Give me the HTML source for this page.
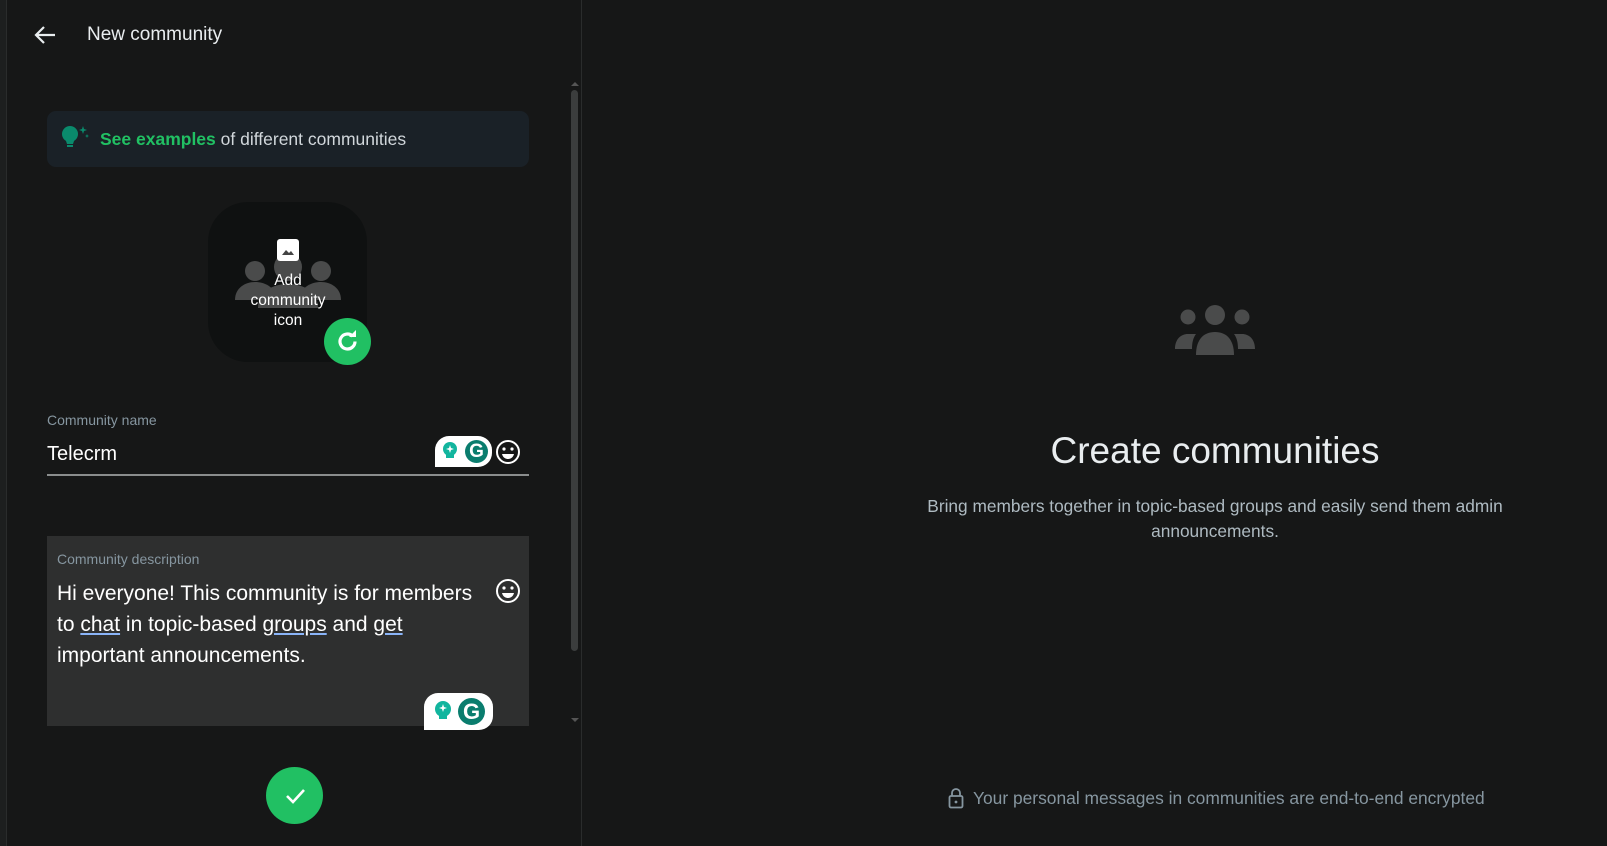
<!DOCTYPE html>
<html><head><meta charset="utf-8"><style>
*{margin:0;padding:0;box-sizing:border-box}
body{width:1607px;height:846px;background:#161717;font-family:"Liberation Sans",sans-serif;color:#e9edef;position:relative;overflow:hidden}
.abs{position:absolute}
.left{left:0;top:0;width:582px;height:846px;background:#161717;border-right:1px solid #2a2c2c}
.lb{left:0;top:0;width:7px;height:846px;background:#1d1f1f;border-right:1px solid #2a2c2c}
.right{left:583px;top:0;width:1024px;height:846px;background:#161717}
.c{text-align:center;transform:translateX(-50%)}
.g{background:#fff;border-radius:14px 14px 14px 0;display:flex;align-items:center;gap:4px;padding:0 4px}
</style></head><body>
<div class="abs left"></div>
<div class="abs lb"></div>
<svg class="abs" style="left:34px;top:25px" width="22" height="20" viewBox="0 0 22 20"><path d="M21 10H3M10 2L2 10l8 8" stroke="#e9edef" stroke-width="2.2" fill="none"/></svg>
<div class="abs" style="left:87px;top:24px;font-size:19px">New community</div>
<div class="abs" style="left:571px;top:78px;width:0;height:0;border:4px solid transparent;border-bottom-color:#555"></div>
<div class="abs" style="left:571px;top:90px;width:7px;height:561px;background:#3b3d3d;border-radius:4px"></div>
<div class="abs" style="left:571px;top:718px;width:0;height:0;border:4px solid transparent;border-top-color:#555"></div>
<div class="abs" style="left:47px;top:111px;width:482px;height:56px;background:#1a2127;border-radius:9px"></div>
<svg class="abs" style="left:60px;top:124px" width="30" height="30" viewBox="0 0 30 30"><circle cx="10" cy="10" r="8" fill="#0a8a6c"/><path d="M5 14h10l-2 6H7z" fill="#0a8a6c"/><rect x="7" y="21" width="6" height="2" fill="#0a8a6c"/><path d="M23 2l1 3 3 1-3 1-1 3-1-3-3-1 3-1z M27 10l.6 1.5 1.4.5-1.4.5-.6 1.5-.6-1.5-1.4-.5 1.4-.5z" fill="#0a8a6c"/></svg>
<div class="abs" style="left:100px;top:129px;font-size:17.5px;color:#d1d7db"><b style="color:#21c063">See examples</b> of different communities</div>
<div class="abs" style="left:208px;top:202px;width:159px;height:160px;background:#0f1111;border-radius:40px"></div>
<svg class="abs" style="left:233px;top:248px" width="110" height="70" viewBox="0 0 110 70"><g fill="#4a4b4b"><circle cx="22" cy="23" r="10"/><circle cx="88" cy="23" r="10"/><circle cx="55" cy="19" r="14"/><path d="M2 52c0-12 10-18 20-18s18 5 20 12v6z"/><path d="M108 52c0-12-10-18-20-18s-18 5-20 12v6z"/><path d="M25 60c0-16 14-24 30-24s30 8 30 24z"/></g></svg>
<div class="abs" style="left:277px;top:239px;width:22px;height:22px;background:#fff;border-radius:3px"><svg width="22" height="22"><path d="M5 16l4-5 3 3 2-2 3 4z" fill="#444"/></svg></div>
<div class="abs c" style="left:288px;top:271px;font-size:15.5px;line-height:20px;color:#fff">Add<br>community<br>icon</div>
<div class="abs" style="left:324px;top:318px;width:47px;height:47px;border-radius:50%;background:#21c063"></div>
<svg class="abs" style="left:334px;top:328px" width="27" height="27" viewBox="0 0 27 27"><path d="M21 13.5a7.5 7.5 0 1 1-2.2-5.3" stroke="#fff" stroke-width="3.2" fill="none"/><path d="M15 5h7v-7z" transform="translate(0,4)" fill="#fff"/></svg>
<div class="abs" style="left:47px;top:412px;font-size:14px;color:#8696a0">Community name</div>
<div class="abs" style="left:47px;top:443px;font-size:20px;color:#fff">Telecrm</div>
<div class="abs g" style="left:435px;top:436px;width:57px;height:31px"><svg width="22" height="24"><circle cx="11" cy="9" r="7" fill="#12b59e"/><path d="M7 14h8v4H7z" fill="#12b59e"/><path d="M11 5l1 3 3 1-3 1-1 3-1-3-3-1 3-1z" fill="#fff"/></svg><div style="width:23px;height:23px;background:#0a7d6e;border-radius:50%;color:#fff;font-weight:bold;font-size:19px;text-align:center;line-height:23px">G</div></div>
<svg class="abs" style="left:495px;top:439px" width="26" height="26" viewBox="0 0 26 26"><circle cx="13" cy="13" r="11" stroke="#fff" stroke-width="2" fill="none"/><circle cx="9" cy="10" r="1.6" fill="#fff"/><circle cx="17" cy="10" r="1.6" fill="#fff"/><path d="M7 15h12c-1 4-4 5-6 5s-5-1-6-5z" fill="#fff"/></svg>
<div class="abs" style="left:47px;top:474px;width:482px;height:2px;background:#8a8d8d"></div>
<div class="abs" style="left:47px;top:536px;width:482px;height:190px;background:#2e2f2f"></div>
<div class="abs" style="left:57px;top:551px;font-size:14px;color:#8696a0">Community description</div>
<div class="abs" style="left:57px;top:578px;font-size:21px;line-height:31px;color:#fff;width:440px;white-space:nowrap">Hi everyone! This community is for members<br>to <u style="text-decoration-color:#8ab4f8">chat</u> in topic-based <u style="text-decoration-color:#8ab4f8">groups</u> and <u style="text-decoration-color:#8ab4f8">get</u><br>important announcements.</div>
<svg class="abs" style="left:495px;top:578px" width="26" height="26" viewBox="0 0 26 26"><circle cx="13" cy="13" r="11" stroke="#fff" stroke-width="2" fill="none"/><circle cx="9" cy="10" r="1.6" fill="#fff"/><circle cx="17" cy="10" r="1.6" fill="#fff"/><path d="M7 15h12c-1 4-4 5-6 5s-5-1-6-5z" fill="#fff"/></svg>
<div class="abs g" style="left:424px;top:693px;width:69px;height:37px;justify-content:center"><svg width="22" height="26"><circle cx="11" cy="10" r="8" fill="#12b59e"/><path d="M7 16h8v4H7z" fill="#12b59e"/><path d="M11 5l1 3 3 1-3 1-1 3-1-3-3-1 3-1z" fill="#fff"/></svg><div style="width:27px;height:27px;background:#0a7d6e;border-radius:50%;color:#fff;font-weight:bold;font-size:22px;text-align:center;line-height:27px">G</div></div>
<div class="abs" style="left:266px;top:767px;width:57px;height:57px;border-radius:50%;background:#21c063"></div>
<svg class="abs" style="left:283px;top:784px" width="24" height="24"><path d="M4 12l6 6L21 6" stroke="#fff" stroke-width="2.6" fill="none"/></svg>
<div class="abs right"></div>
<svg class="abs" style="left:1174px;top:305px" width="82" height="52" viewBox="0 0 82 52"><g fill="#4a4b4b"><circle cx="14" cy="12" r="7.5"/><circle cx="68" cy="12" r="7.5"/><circle cx="41" cy="10" r="10"/><path d="M1 44c0-10 6-15 13-15h8c-3 4-4 9-4 15z"/><path d="M81 44c0-10-6-15-13-15h-8c3 4 4 9 4 15z"/><path d="M22 50c0-16 8-23 19-23s19 7 19 23z"/></g></svg>
<div class="abs c" style="left:1215px;top:430px;font-size:37px;font-weight:300;color:#e9edef;white-space:nowrap">Create communities</div>
<div class="abs c" style="left:1215px;top:494px;font-size:17.3px;line-height:25px;color:#aebac1;width:620px">Bring members together in topic-based groups and easily send them admin announcements.</div>
<svg class="abs" style="left:948px;top:787px" width="16" height="22" viewBox="0 0 16 22"><path d="M4 9V6a4 4 0 0 1 8 0v3" stroke="#8696a0" stroke-width="1.8" fill="none"/><rect x="1.5" y="9" width="13" height="11.5" rx="1.5" stroke="#8696a0" stroke-width="1.8" fill="none"/><circle cx="8" cy="15" r="1.4" fill="#8696a0"/></svg>
<div class="abs" style="left:973px;top:788px;font-size:17.4px;color:#8696a0;white-space:nowrap">Your personal messages in communities are end-to-end encrypted</div>
</body></html>
